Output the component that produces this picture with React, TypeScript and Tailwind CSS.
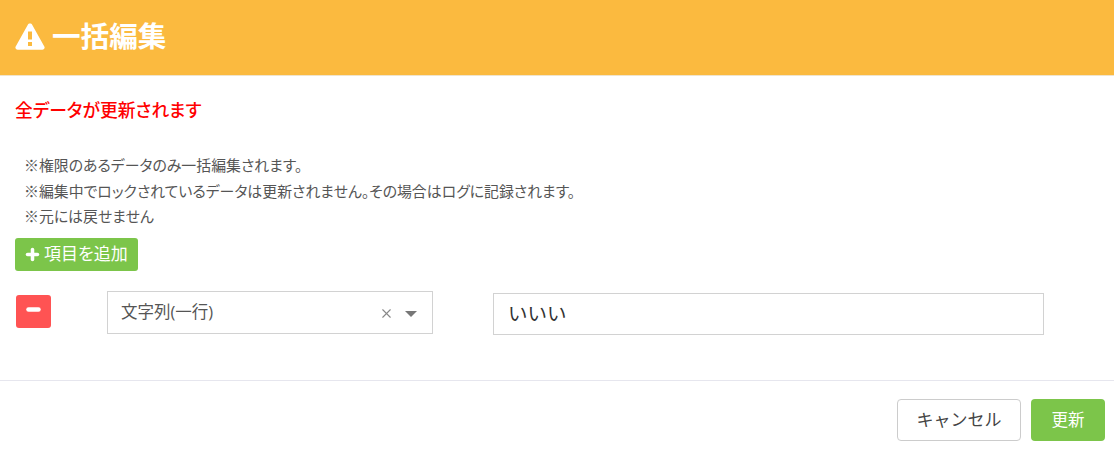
import { Minus, Plus, X } from "lucide-react";

function WarningIcon() {
  return (
    <svg width="30" height="28" viewBox="0 0 30 28" aria-hidden="true">
      <path
        fillRule="evenodd"
        fill="#ffffff"
        d="M15 1.5c1 0 1.8.5 2.3 1.4l12 21.5c.9 1.6-.2 3.4-2 3.4H2.700c-1.800 0-2.900-1.800-2-3.400l12-21.500C13.200 2 14 1.500 15 1.500zM13 9.500v8h4v-8h-4zM13 20v4h4v-4h-4z"
      />
    </svg>
  );
}

export default function App() {
  return (
    <div className="flex h-[451px] w-[1114px] flex-col overflow-hidden bg-white font-['Open_Sans','Noto_Sans_CJK_JP',sans-serif] text-[#555]">
      <header className="flex h-[76px] shrink-0 items-center gap-[7px] border-b border-[#f0e4cc] bg-[#fbba3f] pl-[15px] pb-[3px]">
        <WarningIcon />
        <h1 className="text-[28.600px] font-bold leading-none text-white">一括編集</h1>
      </header>

      <main className="flex-1 px-[15px]">
        <p className="mt-[21px] text-[17.800px] font-medium leading-[26px] text-[#ff0000] [font-feature-settings:'palt']">
          全データが更新されます
        </p>

        <div className="mt-[30px] pl-[9px] text-[14.900px] leading-[25.500px] text-[#555] [font-feature-settings:'palt']">
          <p>※権限のあるデータのみ一括編集されます。</p>
          <p>※編集中でロックされているデータは更新されません。その場合はログに記録されます。</p>
          <p>※元には戻せません</p>
        </div>

        <button className="mt-[8px] flex h-[33px] w-[123px] items-center gap-[3px] rounded-[3px] bg-[#7cc54a] pl-[9px] text-[17px] text-white [font-feature-settings:'palt']">
          <Plus size={17} strokeWidth={5} />
          項目を追加
        </button>

        <div className="mt-[20px] flex items-start pl-[1px]">
          <button className="mt-[4px] flex h-[33px] w-[35px] items-center justify-center rounded-[3px] bg-[#ff5353] pb-[3px] text-white">
            <Minus size={17} strokeWidth={6.500} />
          </button>
          <div className="ml-[56px] flex h-[43px] w-[326px] items-center border border-[#d2d2d2] pl-[13px] pr-[15px] text-[16.500px] text-[#555]">
            <span className="flex-1">文字列(一行)</span>
            <X size={15} strokeWidth={1.800} className="mr-[11px] mt-[2px] text-[#888]" />
            <span className="mt-[3px] h-0 w-0 border-x-[6px] border-t-[6px] border-x-transparent border-t-[#777]" />
          </div>
          <input
            readOnly
            value="いいい"
            className="ml-[60px] mt-[2px] h-[42px] w-[551px] border border-[#d2d2d2] pb-[2px] pl-[14px] text-[19.500px] text-[#333] outline-none"
          />
        </div>
      </main>

      <footer className="flex h-[71px] shrink-0 justify-end gap-[10px] border-t border-[#e6e6ee] pr-[9px] pt-[18px]">
        <button className="h-[42px] w-[124px] rounded-[4px] border border-[#cccccc] bg-white text-[17px] text-[#444]">
          キャンセル
        </button>
        <button className="h-[42px] w-[74px] rounded-[4px] bg-[#7cc54a] text-[16.500px] text-white">更新</button>
      </footer>
    </div>
  );
}
